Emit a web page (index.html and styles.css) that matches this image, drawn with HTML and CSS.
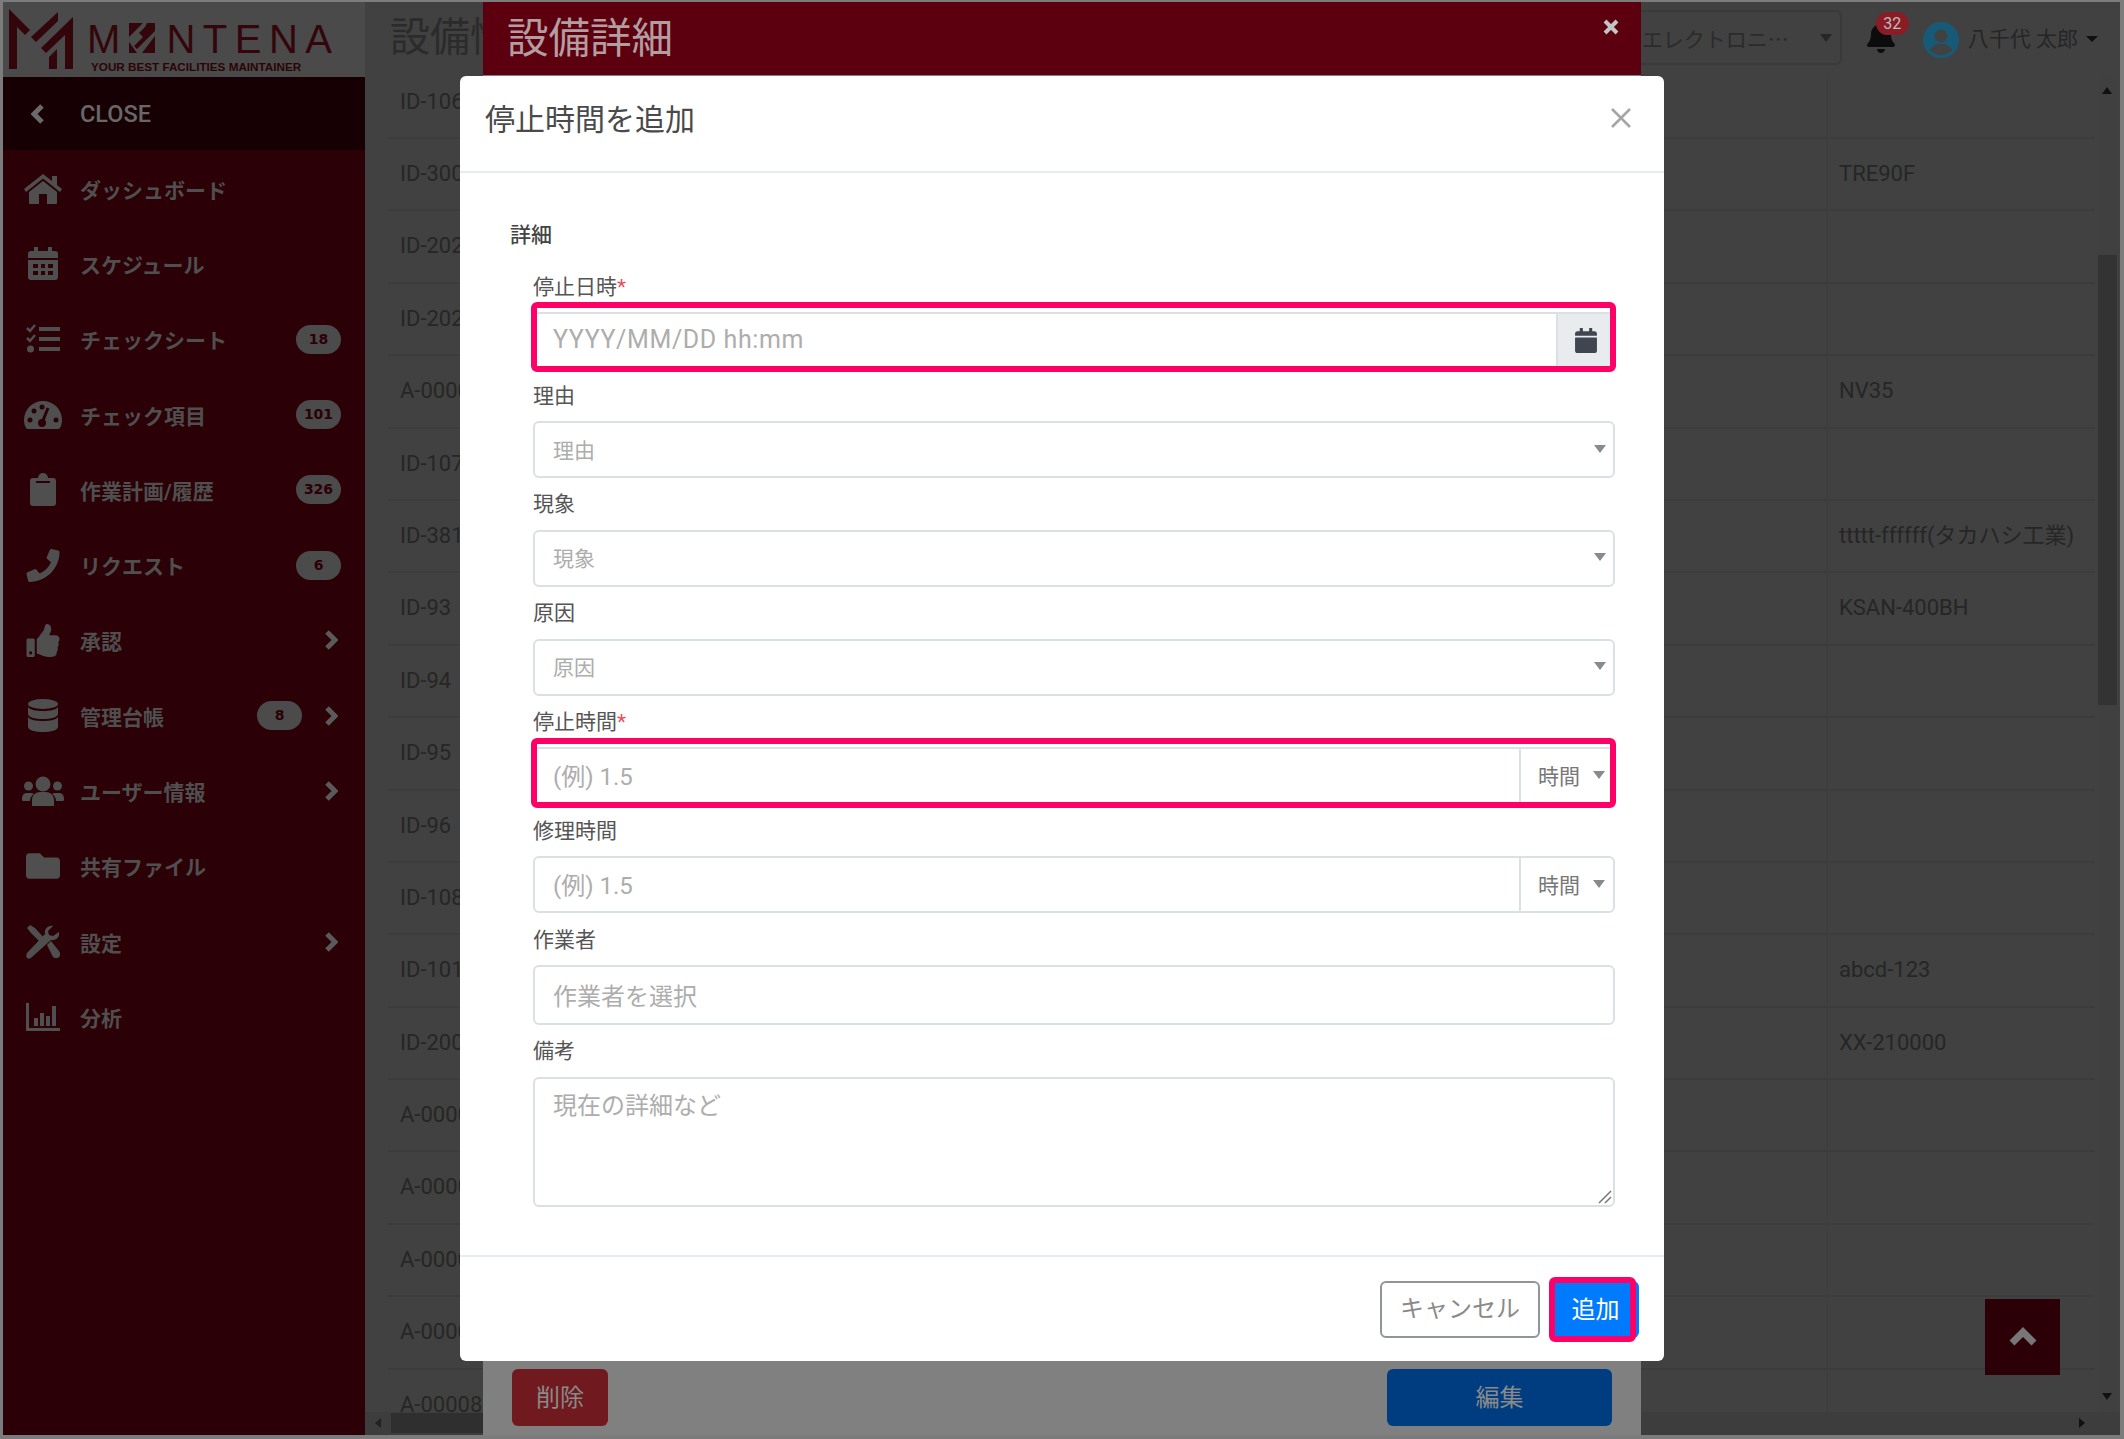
FILE: index.html
```html
<!DOCTYPE html>
<html lang="ja">
<head>
    <meta charset="UTF-8" />
    <title>停止時間を追加</title>
    <link rel="stylesheet" href="styles.css">
</head>
<body>
    <div class="page">
        <header class="topbar">
            <div class="brand">
                <svg class="brand-mark" width="66" height="62" viewBox="9 9 66 62">
                    <path d="M9 10L30 31 25 36 17 28V70H9Z" />
                    <path d="M58 13V22L36 43 31 38Z" />
                    <path d="M73 18V70H65V36L46 54 41 49Z" />
                    <path d="M49 70V58L57 50V70Z" />
                </svg>
                <div class="brand-text">
                    <div class="brand-name">M<span class="brand-o">O<svg width="26" height="30" viewBox="0 0 26 30"><path d="M0 0H14L0 14Z M18 0H26V8L8 26 5 23 14 14 10 10 16 4Z M26 13V30H13Z M0 19L8 30H0Z" /></svg></span>NTENA</div>
                    <div class="brand-sub">YOUR BEST FACILITIES MAINTAINER</div>
                </div>
            </div>
            <div class="page-title">設備情報</div>
            <div class="topbar-right">
                <div class="factory-select">エレクトロニ…<span class="arrow arrow-dark"></span></div>
                <div class="bell">
                    <svg width="28" height="32" viewBox="0 0 448 512"><path d="M224 512c35.32 0 63.97-28.65 63.97-64H160.03c0 35.35 28.65 64 63.97 64zm215.39-149.71c-19.32-20.76-55.47-51.99-55.47-154.29 0-77.7-54.48-139.9-127.94-155.16V32c0-17.67-14.32-32-31.98-32s-31.98 14.33-31.98 32v20.84C118.56 68.1 64.08 130.3 64.08 208c0 102.3-36.15 133.53-55.47 154.29-6 6.45-8.66 14.16-8.61 21.71.11 16.4 12.98 32 32.1 32h383.8c19.12 0 32-15.6 32.1-32 .05-7.55-2.61-15.27-8.61-21.71z" /></svg>
                    <span class="bell-count">32</span>
                </div>
                <svg class="avatar" width="36" height="36" viewBox="0 0 36 36">
                    <circle cx="18" cy="18" r="18" fill="#175a78" />
                    <circle cx="18" cy="14" r="6.5" fill="#414141" />
                    <path d="M7 28c2-5 6-6 11-6s9 1 11 6c-3 3-7 5-11 5s-8-2-11-5Z" fill="#414141" />
                </svg>
                <div class="user-name">八千代 太郎</div>
                <span class="caret"></span>
            </div>
        </header>

        <div class="layout">
            <aside class="sidebar">
                <div class="sidebar-close">
                    <svg width="14" height="22" viewBox="0 0 14 22"><path d="M11 3L3 11l8 8" /></svg>
                    <span>CLOSE</span>
                </div>
                <nav class="menu">
                    <a class="menu-item">
                        <span class="menu-icon"><svg width="38" height="30" viewBox="0 0 38 30"><path d="M19 0L38 15 36 18 19 4.500 2 18 0 15Z M28 2h5v10l-5-4Z M19 7L33 18V29a1 1 0 0 1-1 1H23V20H15V30H6a1 1 0 0 1-1-1V18Z" /></svg></span>
                        <span>ダッシュボード</span>
                    </a>
                    <a class="menu-item">
                        <span class="menu-icon"><svg width="30" height="33" viewBox="0 0 30 33"><path fill-rule="evenodd" d="M6 0h4v4h10V0h4v4h3a3 3 0 0 1 3 3v4H0V7a3 3 0 0 1 3-3h3Z M0 13h30v17a3 3 0 0 1-3 3H3a3 3 0 0 1-3-3Z M5 17v4h5v-4Z M13 17v4h4v-4Z M20 17v4h5v-4Z M5 24v4h5v-4Z M13 24v4h4v-4Z M20 24v4h5v-4Z" /></svg></span>
                        <span>スケジュール</span>
                    </a>
                    <a class="menu-item">
                        <span class="menu-icon"><svg width="34" height="30" viewBox="0 0 34 30"><path d="M13 3h21v4H13Z M13 13h21v4H13Z M13 23h21v4H13Z" /><path d="M1 4l3 3 5-6 M1 14l3 3 5-6" fill="none" stroke="currentColor" stroke-width="2.500" /><circle cx="4.500" cy="25" r="3.500" /></svg></span>
                        <span>チェックシート</span>
                        <span class="badge">18</span>
                    </a>
                    <a class="menu-item">
                        <span class="menu-icon"><svg width="38" height="28" viewBox="0 0 38 28"><path d="M19 0A19 19 0 0 0 0 19c0 3 .8 6 2.300 8.300.4.500 1 .7 1.600.7h30.200c.6 0 1.200-.2 1.600-.7C37.200 25 38 22 38 19A19 19 0 0 0 19 0Z" /><g fill="#2b0006"><circle cx="6" cy="19" r="2.500" /><circle cx="10" cy="10" r="2.500" /><circle cx="18" cy="6" r="2.500" /><circle cx="32" cy="19" r="2.500" /><circle cx="18" cy="22" r="4" /></g><path d="M18 22L24 7" stroke="#2b0006" stroke-width="3" /></svg></span>
                        <span>チェック項目</span>
                        <span class="badge">101</span>
                    </a>
                    <a class="menu-item">
                        <span class="menu-icon"><svg width="26" height="33" viewBox="0 0 26 33"><path d="M3 5h5a5 5 0 0 1 10 0h5a3 3 0 0 1 3 3v22a3 3 0 0 1-3 3H3a3 3 0 0 1-3-3V8a3 3 0 0 1 3-3Z" /><rect x="6" y="8" width="14" height="2" fill="#2b0006" /></svg></span>
                        <span>作業計画/履歴</span>
                        <span class="badge">326</span>
                    </a>
                    <a class="menu-item">
                        <span class="menu-icon"><svg width="34" height="33" viewBox="0 0 512 512"><path d="M493.400 24.600l-104-24c-11.300-2.600-22.900 3.300-27.500 13.900l-48 112c-4.200 9.800-1.400 21.300 6.900 28l60.600 49.600c-36 76.700-98.900 140.500-177.200 177.200l-49.600-60.600c-6.800-8.300-18.200-11.100-28-6.900l-112 48C3.900 366.500-2 378.100.6 389.400l24 104C27.100 504.200 36.700 512 48 512c256.100 0 464-207.500 464-464 0-11.200-7.700-20.900-18.600-23.400z" /></svg></span>
                        <span>リクエスト</span>
                        <span class="badge">6</span>
                    </a>
                    <a class="menu-item">
                        <span class="menu-icon"><svg width="34" height="33" viewBox="0 0 512 512"><path d="M104 224H24c-13.255 0-24 10.745-24 24v240c0 13.255 10.745 24 24 24h80c13.255 0 24-10.745 24-24V248c0-13.255-10.745-24-24-24zM64 472c-13.255 0-24-10.745-24-24s10.745-24 24-24 24 10.745 24 24-10.745 24-24 24zM384 81.452c0 42.416-25.970 66.208-33.277 94.548h101.723c33.397 0 59.397 27.746 59.553 58.098.084 17.938-7.546 37.249-19.439 49.197l-.11.11c9.836 23.337 8.237 56.037-9.308 79.469 8.681 25.895-.069 57.704-16.382 74.757 4.298 17.598 2.244 32.575-6.148 44.632C440.202 511.587 389.616 512 346.839 512l-2.845-.001c-48.287-.017-87.806-17.598-119.560-31.725-15.957-7.099-36.821-15.887-52.651-16.178-6.540-.12-11.783-5.457-11.783-11.998v-213.770c0-3.200 1.282-6.271 3.558-8.521 39.614-39.144 56.648-80.587 89.117-113.111 14.804-14.832 20.188-37.236 25.393-58.902C282.515 39.293 291.817 0 312 0c24 0 72 8 72 81.452z" /></svg></span>
                        <span>承認</span>
                        <svg class="chevron" width="14" height="22" viewBox="0 0 14 22"><path d="M3 3l8 8-8 8" /></svg>
                    </a>
                    <a class="menu-item">
                        <span class="menu-icon"><svg width="30" height="33" viewBox="0 0 30 33"><ellipse cx="15" cy="5" rx="15" ry="5" /><path d="M0 8c2 3 8 4 15 4s13-1 15-4v7c0 3-7 5-15 5S0 18 0 15Z M0 18c2 3 8 4 15 4s13-1 15-4v10c0 3-7 5-15 5S0 31 0 28Z" /></svg></span>
                        <span>管理台帳</span>
                        <span class="badge badge-before-chevron">8</span>
                        <svg class="chevron" width="14" height="22" viewBox="0 0 14 22"><path d="M3 3l8 8-8 8" /></svg>
                    </a>
                    <a class="menu-item">
                        <span class="menu-icon"><svg width="42" height="30" viewBox="0 0 42 30"><circle cx="21" cy="8" r="7.500" /><circle cx="6.500" cy="10" r="4.500" /><circle cx="35.500" cy="10" r="4.500" /><path d="M10 30V24c0-5 4-8 8-8h6c4 0 8 3 8 8v6Z M0 23c0-4 2-6 5-6h4c1 0 2 .5 3 1-2.500 1.500-4 4-4 7H1c-.5 0-1-.5-1-2Z M42 23c0-4-2-6-5-6h-4c-1 0-2 .5-3 1 2.500 1.500 4 4 4 7h7c.5 0 1-.5 1-2Z" /></svg></span>
                        <span>ユーザー情報</span>
                        <svg class="chevron" width="14" height="22" viewBox="0 0 14 22"><path d="M3 3l8 8-8 8" /></svg>
                    </a>
                    <a class="menu-item">
                        <span class="menu-icon"><svg width="34" height="26" viewBox="0 64 512 384"><path d="M464 128H272l-64-64H48C21.490 64 0 85.490 0 112v288c0 26.510 21.490 48 48 48h416c26.510 0 48-21.490 48-48V176c0-26.510-21.490-48-48-48z" /></svg></span>
                        <span>共有ファイル</span>
                    </a>
                    <a class="menu-item">
                        <span class="menu-icon"><svg width="34" height="34" viewBox="0 0 34 34"><path d="M1 3L4 0 9 3 19 14 15 18 5 8Z" /><path d="M33 7c1 5-3 9-8 8L6 32c-2 2-4 2-5 1s-1-3 0-5L19 9c-1-5 3-9 8-8L22 6l1 4 4 1Z" /><path d="M21 20l4-4 8 10c2 3 1 5 0 6s-3 2-6 0Z" /></svg></span>
                        <span>設定</span>
                        <svg class="chevron" width="14" height="22" viewBox="0 0 14 22"><path d="M3 3l8 8-8 8" /></svg>
                    </a>
                    <a class="menu-item">
                        <span class="menu-icon"><svg width="34" height="28" viewBox="0 0 34 28"><path d="M0 0h3v25h31v3H0Z M8 15h4v8H8Z M14 10h4v13h-4Z M20 13h4v10h-4Z M26 3h4v20h-4Z" /></svg></span>
                        <span>分析</span>
                    </a>
                </nav>
            </aside>

            <main class="content">
                <div class="content-main">
                    <div class="table-area">
                        <div class="row"><div class="cell-id">ID-106</div><div class="cell-model"></div></div>
                        <div class="row"><div class="cell-id">ID-300</div><div class="cell-model">TRE90F</div></div>
                        <div class="row"><div class="cell-id">ID-202</div><div class="cell-model"></div></div>
                        <div class="row"><div class="cell-id">ID-202</div><div class="cell-model"></div></div>
                        <div class="row"><div class="cell-id">A-0000</div><div class="cell-model">NV35</div></div>
                        <div class="row"><div class="cell-id">ID-107</div><div class="cell-model"></div></div>
                        <div class="row"><div class="cell-id">ID-381</div><div class="cell-model">ttttt-ffffff(タカハシ工業)</div></div>
                        <div class="row"><div class="cell-id">ID-93</div><div class="cell-model">KSAN-400BH</div></div>
                        <div class="row"><div class="cell-id">ID-94</div><div class="cell-model"></div></div>
                        <div class="row"><div class="cell-id">ID-95</div><div class="cell-model"></div></div>
                        <div class="row"><div class="cell-id">ID-96</div><div class="cell-model"></div></div>
                        <div class="row"><div class="cell-id">ID-108</div><div class="cell-model"></div></div>
                        <div class="row"><div class="cell-id">ID-101</div><div class="cell-model">abcd-123</div></div>
                        <div class="row"><div class="cell-id">ID-200</div><div class="cell-model">XX-210000</div></div>
                        <div class="row"><div class="cell-id">A-0000</div><div class="cell-model"></div></div>
                        <div class="row"><div class="cell-id">A-0000</div><div class="cell-model"></div></div>
                        <div class="row"><div class="cell-id">A-0000</div><div class="cell-model"></div></div>
                        <div class="row"><div class="cell-id">A-0000</div><div class="cell-model"></div></div>
                        <div class="row"><div class="cell-id">A-00008</div><div class="cell-model"></div></div>
                    </div>
                    <div class="vscroll">
                        <span class="vscroll-up"></span>
                        <span class="vscroll-thumb"></span>
                        <span class="vscroll-down"></span>
                    </div>
                </div>
                <div class="hscroll">
                    <span class="hscroll-left"></span>
                    <span class="hscroll-thumb"></span>
                    <span class="hscroll-right"></span>
                </div>
            </main>
        </div>
    </div>

    <div class="back-top">
        <svg width="30" height="20" viewBox="0 0 30 20"><path d="M4 16L15 5l11 11" /></svg>
    </div>

    <!-- 奥のモーダル -->
    <div class="detail-modal">
        <div class="detail-header">
            <span class="detail-title">設備詳細</span>
            <svg width="16" height="16" viewBox="0 0 16 16"><path d="M2 2l12 12M14 2L2 14" /></svg>
        </div>
        <div class="detail-body"></div>
        <div class="detail-footer">
            <button class="btn-delete">削除</button>
            <button class="btn-edit">編集</button>
        </div>
    </div>

    <!-- 停止時間を追加 -->
    <div class="add-modal">
        <div class="add-header">
            <h5>停止時間を追加</h5>
            <svg width="20" height="20" viewBox="0 0 20 20"><path d="M1 1l18 18M19 1L1 19" /></svg>
        </div>
        <div class="add-body">
            <div class="section-title">詳細</div>
            <div class="fields">
                <div class="field">
                    <label>停止日時<span class="required">*</span></label>
                    <div class="input-group marked-date">
                        <div class="input input-date placeholder">YYYY/MM/DD hh:mm</div>
                        <div class="addon">
                            <svg width="22" height="25" viewBox="0 0 448 512"><path d="M12 192h424c6.600 0 12 5.400 12 12v260c0 26.500-21.500 48-48 48H48c-26.500 0-48-21.500-48-48V204c0-6.600 5.400-12 12-12zm436-44v-36c0-26.500-21.500-48-48-48h-48V12c0-6.600-5.400-12-12-12h-40c-6.600 0-12 5.400-12 12v52H160V12c0-6.600-5.400-12-12-12h-40c-6.600 0-12 5.400-12 12v52H48C21.500 64 0 85.500 0 112v36c0 6.600 5.400 12 12 12h424c6.600 0 12-5.400 12-12z" /></svg>
                        </div>
                        <span class="marker"></span>
                    </div>
                </div>
                <div class="field">
                    <label>理由</label>
                    <div class="input select placeholder">理由<span class="arrow"></span></div>
                </div>
                <div class="field">
                    <label>現象</label>
                    <div class="input select placeholder">現象<span class="arrow"></span></div>
                </div>
                <div class="field">
                    <label>原因</label>
                    <div class="input select placeholder">原因<span class="arrow"></span></div>
                </div>
                <div class="field">
                    <label>停止時間<span class="required">*</span></label>
                    <div class="input-group marked-time">
                        <div class="input input-large placeholder">(例) 1.5</div>
                        <div class="unit">時間<span class="arrow"></span></div>
                        <span class="marker"></span>
                    </div>
                </div>
                <div class="field">
                    <label>修理時間</label>
                    <div class="input-group">
                        <div class="input input-large placeholder">(例) 1.5</div>
                        <div class="unit">時間<span class="arrow"></span></div>
                    </div>
                </div>
                <div class="field">
                    <label>作業者</label>
                    <div class="input input-large input-worker placeholder">作業者を選択</div>
                </div>
                <div class="field">
                    <label>備考</label>
                    <div class="textarea placeholder">現在の詳細など
                        <svg class="resize-grip" width="14" height="14" viewBox="0 0 14 14"><path d="M13 1L1 13M13 7l-6 6" /></svg>
                    </div>
                </div>
            </div>
        </div>
        <div class="add-footer">
            <button class="btn-cancel">キャンセル</button>
            <button class="btn-add">追加<span class="marker"></span></button>
        </div>
    </div>
</body>
</html>
```

FILE: styles.css
```css
* {
    box-sizing: border-box;
}

body {
    position: relative;
    width: 2124px;
    height: 1439px;
    margin: 0;
    padding: 2px 4px 4px 3px;
    overflow: hidden;
    background-color: #7c7c7c;
    font-family: Roboto, "Noto Sans CJK JP", sans-serif;
    font-size: 21px;
    color: #555;
}

button {
    font-family: inherit;
    cursor: pointer;
}

.page {
    display: flex;
    flex-direction: column;
    height: 100%;
    background-color: #414141;
}

/* ヘッダー */
.topbar {
    display: flex;
    align-items: stretch;
    height: 75px;
    flex-shrink: 0;
}

.brand {
    display: flex;
    width: 362px;
    flex-shrink: 0;
    padding: 6px 0 0 6px;
    background-color: #4a4a4a;
}

.brand-mark {
    flex-shrink: 0;
    fill: #33060b;
}

.brand-text {
    margin-left: 12px;
}

.brand-name {
    height: 42px;
    padding-top: 11px;
    font-family: "Liberation Sans", sans-serif;
    font-size: 40px;
    line-height: 40px;
    letter-spacing: 7.500px;
    color: #33060b;
    white-space: nowrap;
}

.brand-o {
    position: relative;
    color: transparent;
}

.brand-o svg {
    position: absolute;
    left: 1px;
    top: 6px;
    fill: #33060b;
}

.brand-sub {
    margin: 9px 0 0 4px;
    font-family: "Liberation Sans", sans-serif;
    font-size: 11.700px;
    font-weight: bold;
    line-height: 16px;
    color: #2a0508;
    white-space: nowrap;
}

.page-title {
    padding: 0 0 0 25px;
    font-size: 40px;
    line-height: 72px;
    color: #2b2b2b;
    white-space: nowrap;
}

.topbar-right {
    display: flex;
    align-items: center;
    margin-left: auto;
    padding-right: 22px;
}

.factory-select {
    display: flex;
    align-items: center;
    justify-content: space-between;
    width: 204px;
    height: 55px;
    margin: -4px 25px 0 0;
    padding: 0 8px 0 4px;
    border: 2px solid #3a3a3a;
    border-left: none;
    border-radius: 0 6px 6px 0;
    font-family: "Noto Sans CJK JP", sans-serif;
    color: #2b2b2b;
    white-space: nowrap;
}

.bell {
    position: relative;
    width: 29px;
    height: 32px;
    margin: 0 24px 6px 0;
    fill: #0c0c0c;
}

.bell-count {
    position: absolute;
    top: -9px;
    left: 9px;
    width: 33px;
    height: 23px;
    border-radius: 12px;
    background-color: #8a1c26;
    font-size: 16px;
    line-height: 23px;
    text-align: center;
    color: #bdbdbd;
}

.avatar {
    flex-shrink: 0;
    margin: 0 0 0 3px;
}

.user-name {
    margin: 0 0 2px 9px;
    line-height: 32px;
    color: #262626;
    white-space: nowrap;
}

.caret {
    width: 0;
    height: 0;
    margin: 0 0 2px 8px;
    border-top: 6px solid #0f0f0f;
    border-left: 6px solid transparent;
    border-right: 6px solid transparent;
}

.arrow {
    width: 0;
    height: 0;
    border-top: 8px solid #8a8a8a;
    border-left: 6.500px solid transparent;
    border-right: 6.500px solid transparent;
}

.arrow-dark {
    border-top-color: #262626;
}

/* サイドバー */
.layout {
    display: flex;
    flex: 1;
    min-height: 0;
}

.sidebar {
    width: 362px;
    flex-shrink: 0;
    background-color: #2b0006;
    color: #4f4f4f;
}

.sidebar-close {
    display: flex;
    align-items: center;
    height: 73px;
    padding-left: 28px;
    background-color: #170003;
    font-size: 23.500px;
    font-weight: 500;
    color: #686868;
}

.sidebar-close svg {
    margin-right: 35px;
    fill: none;
    stroke: #6a6a6a;
    stroke-width: 5;
}

.menu {
    padding-top: 1px;
}

.menu-item {
    display: flex;
    align-items: center;
    height: 75.300px;
    padding-left: 16px;
    font-weight: 700;
    white-space: nowrap;
}

.menu-icon {
    display: flex;
    align-items: center;
    justify-content: center;
    width: 48px;
    margin-right: 13px;
    fill: #4f4f4f;
    color: #4f4f4f;
}

.badge {
    width: 45px;
    height: 29px;
    margin: 0 24px 0 auto;
    border-radius: 15px;
    background-color: #4b4b4b;
    font-family: "DejaVu Sans", sans-serif;
    font-size: 14px;
    font-weight: 700;
    line-height: 29px;
    text-align: center;
    color: #2b0006;
}

.badge-before-chevron {
    margin-right: 22px;
}

.chevron {
    margin: 0 27px 0 auto;
    fill: none;
    stroke: #5a5a5a;
    stroke-width: 5;
}

.badge-before-chevron + .chevron {
    margin-left: 0;
}

/* 背景のテーブル */
.content {
    display: flex;
    flex-direction: column;
    flex: 1;
    min-width: 0;
}

.content-main {
    display: flex;
    flex: 1;
    min-height: 0;
}

.table-area {
    width: 1730px;
    height: 1335px;
    padding-left: 23px;
    overflow: hidden;
    font-size: 22px;
    color: #262626;
}

.row {
    display: flex;
    width: 1707px;
    height: 72.400px;
    border-bottom: 2px solid #3c3c3c;
    line-height: 70px;
}

.row:first-child {
    height: 62px;
    line-height: 50px;
}

.cell-id {
    width: 1439px;
    padding-left: 12px;
}

.cell-model {
    flex: 1;
    padding-left: 11px;
    border-left: 1px solid #3c3c3c;
    white-space: nowrap;
}

.vscroll {
    position: relative;
    width: 20px;
    margin-left: 3px;
    background-color: #404040;
}

.vscroll-up,
.vscroll-down {
    position: absolute;
    left: 4px;
    width: 0;
    height: 0;
    border-left: 5px solid transparent;
    border-right: 5px solid transparent;
}

.vscroll-up {
    top: 10px;
    border-bottom: 7px solid #111;
}

.vscroll-down {
    bottom: 12px;
    border-top: 7px solid #111;
}

.vscroll-thumb {
    position: absolute;
    top: 178px;
    left: 0;
    width: 19px;
    height: 450px;
    background-color: #333;
}

.hscroll {
    position: relative;
    height: 23px;
    flex-shrink: 0;
    background-color: #3d3d3d;
}

.hscroll-left,
.hscroll-right {
    position: absolute;
    top: 6px;
    width: 0;
    height: 0;
    border-top: 5px solid transparent;
    border-bottom: 5px solid transparent;
}

.hscroll-left {
    left: 10px;
    border-right: 6px solid #222;
}

.hscroll-right {
    left: 1714px;
    border-left: 6px solid #111;
}

.hscroll-thumb {
    position: absolute;
    top: 1px;
    left: 26px;
    width: 300px;
    height: 20px;
    background-color: #2f2f2f;
}

.back-top {
    position: absolute;
    left: 1985px;
    top: 1299px;
    display: flex;
    align-items: center;
    justify-content: center;
    width: 75px;
    height: 76px;
    background-color: #2b0006;
}

.back-top svg {
    fill: none;
    stroke: #777;
    stroke-width: 7;
}

/* 奥のモーダル */
.detail-modal {
    position: absolute;
    left: 483px;
    top: 2px;
    display: flex;
    flex-direction: column;
    width: 1158px;
    height: 1433px;
    background-color: #808080;
}

.detail-header {
    display: flex;
    align-items: flex-start;
    justify-content: space-between;
    height: 73px;
    padding: 7px 22px 0 24px;
    background-color: #5c000f;
}

.detail-title {
    font-size: 41.500px;
    line-height: 60px;
    color: #b49da0;
}

.detail-header svg {
    margin-top: 10px;
    fill: none;
    stroke: #c4c4c4;
    stroke-width: 4;
}

.detail-body {
    flex: 1;
}

.detail-footer {
    display: flex;
    justify-content: space-between;
    padding: 0 29px 9px;
}

.btn-delete,
.btn-edit {
    height: 57px;
    padding-bottom: 5px;
    border: none;
    border-radius: 6px;
    font-size: 24px;
    color: #8a8a8a;
}

.btn-delete {
    width: 96px;
    background-color: #701a20;
}

.btn-edit {
    width: 225px;
    background-color: #003d80;
}

/* 手前のモーダル */
.add-modal {
    position: absolute;
    left: 460px;
    top: 76px;
    display: flex;
    flex-direction: column;
    width: 1204px;
    height: 1285px;
    border-radius: 6px;
    background-color: #fff;
}

.add-header {
    display: flex;
    align-items: center;
    justify-content: space-between;
    height: 97px;
    padding: 0 33px 8px 25px;
    border-bottom: 2px solid #e9ecef;
}

.add-header h5 {
    margin: 0;
    font-size: 30px;
    font-weight: 400;
    line-height: 45px;
    color: #4a4a4a;
}

.add-header svg {
    margin-bottom: 4px;
    fill: none;
    stroke: #a5a5a5;
    stroke-width: 2.500;
}

.add-body {
    flex: 1;
    padding: 47px 49px 0 50px;
}

.section-title {
    font-weight: 500;
    line-height: 31.500px;
    color: #444;
}

.fields {
    margin-top: 9px;
    padding-left: 23px;
}

.field {
    padding-top: 11.300px;
}

.field label {
    display: block;
    margin-bottom: 9px;
    line-height: 31.500px;
}

.required {
    color: #e8505f;
}

.input {
    display: flex;
    align-items: center;
    height: 57px;
    padding: 0 18px;
    border: 2px solid #dbe0e5;
    border-radius: 6px;
    background-color: #fff;
}

.input-large {
    font-size: 24px;
    padding-bottom: 2px;
}

.input-date {
    font-size: 25px;
    letter-spacing: .6px;
    padding-bottom: 2px;
}

.input-worker {
    height: 60px;
}

.placeholder {
    color: #adadad;
}

.select {
    justify-content: space-between;
    padding: 0 7px 2px 18px;
}

.input-group {
    position: relative;
    display: flex;
}

.input-group .input {
    flex: 1;
    border-radius: 6px 0 0 6px;
}

.addon {
    display: flex;
    align-items: center;
    justify-content: center;
    width: 59px;
    height: 57px;
    margin-left: -2px;
    border: 2px solid #dbe0e5;
    border-radius: 0 6px 6px 0;
    background-color: #e9ecef;
    fill: #3f4650;
}

.unit {
    display: flex;
    align-items: center;
    justify-content: space-between;
    width: 96px;
    height: 57px;
    margin-left: -2px;
    padding: 0 8px 2px 17px;
    border: 2px solid #dbe0e5;
    border-radius: 0 6px 6px 0;
    color: #777;
}

.textarea {
    position: relative;
    height: 130px;
    padding: 9px 18px;
    border: 2px solid #dbe0e5;
    border-radius: 6px;
    font-size: 24px;
    line-height: 36px;
}

.resize-grip {
    position: absolute;
    right: 1px;
    bottom: 1px;
    fill: none;
    stroke: #777;
    stroke-width: 1.500;
}

/* 赤枠 */
.marker {
    position: absolute;
    border: 6px solid #ff0066;
    border-radius: 6px;
    pointer-events: none;
}

.marked-date .marker {
    inset: -10px -1px -3px -2px;
}

.marked-time .marker {
    inset: -9px -1px -4px -2px;
}

.add-footer {
    display: flex;
    justify-content: flex-end;
    align-items: center;
    height: 106px;
    padding: 0 25px 0 0;
    border-top: 2px solid #e9ecef;
}

.btn-cancel {
    width: 160px;
    height: 57px;
    margin-right: 12px;
    padding: 0 0 5px;
    border: 2px solid #8f959b;
    border-radius: 6px;
    background-color: #fff;
    font-size: 24px;
    color: #8a8a8a;
}

.btn-add {
    position: relative;
    width: 87px;
    height: 57px;
    padding: 0 0 4px;
    border: none;
    border-radius: 6px;
    background-color: #007bff;
    font-size: 24px;
    color: #fff;
}

.btn-add .marker {
    inset: -4px 3px -4px -3px;
}
```
